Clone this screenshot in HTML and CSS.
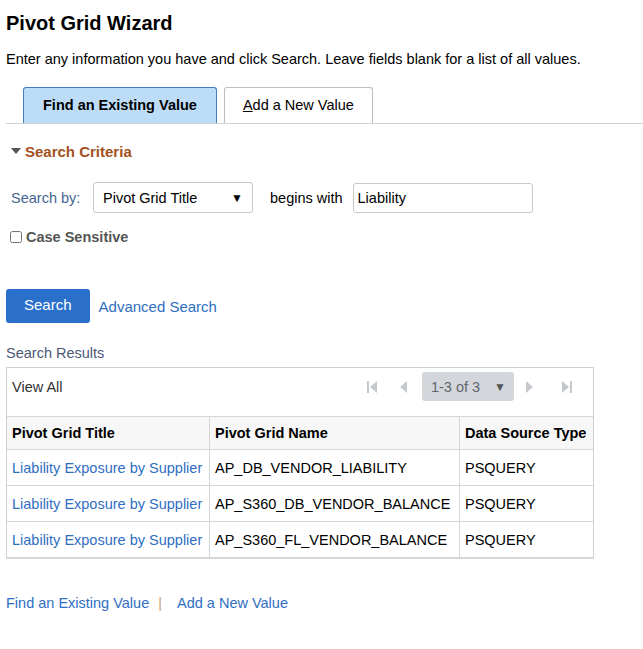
FILE: index.html
```html
<!DOCTYPE html>
<html lang="en">
  <head>
    <meta charset="UTF-8" />
    <meta name="viewport" content="width=device-width, initial-scale=1.0">
    <title>Pivot Grid Wizard</title>
    <link rel="stylesheet" href="styles.css">
  </head>
  <body>
    <h1 class="page-title">Pivot Grid Wizard</h1>
    <p class="instructions">Enter any information you have and click Search. Leave fields blank for a list of all values.</p>

    <div class="tabs">
      <a href="#" class="tab active">Find an Existing Value</a>
      <a href="#" class="tab"><u>A</u>dd a New Value</a>
    </div>

    <div class="criteria">
      <div class="criteria-head">
        <span class="caret"></span>
        <span>Search Criteria</span>
      </div>

      <div class="search-row">
        <label class="field-label">Search by:</label>
        <div class="select">
          <span>Pivot Grid Title</span>
          <span class="select-arrow">&#9660;</span>
        </div>
        <span class="op-label">begins with</span>
        <input type="text" class="text-input" value="Liability" />
      </div>

      <label class="case-row">
        <input type="checkbox" class="check" />
        <span>Case Sensitive</span>
      </label>
    </div>

    <div class="actions">
      <button class="btn">Search</button>
      <a href="#" class="link">Advanced Search</a>
    </div>

    <div class="results-label">Search Results</div>
    <div class="grid">
      <div class="grid-toolbar">
        <span class="view-all">View All</span>
        <div class="pager">
          <!-- first / previous -->
          <svg class="pg-icon pg-first" width="10" height="14" viewBox="0 0 10 14">
            <rect x="0" y="1" width="2" height="12" />
            <polygon points="10,1 10,13 3,7" />
          </svg>
          <svg class="pg-icon pg-prev" width="8" height="14" viewBox="0 0 8 14">
            <polygon points="8,1 8,13 1,7" />
          </svg>
          <div class="page-select">
            <span>1-3 of 3</span>
            <span class="page-arrow">&#9660;</span>
          </div>
          <!-- next / last -->
          <svg class="pg-icon pg-next" width="8" height="14" viewBox="0 0 8 14">
            <polygon points="0,1 0,13 7,7" />
          </svg>
          <svg class="pg-icon pg-last" width="10" height="14" viewBox="0 0 10 14">
            <polygon points="0,1 0,13 7,7" />
            <rect x="8" y="1" width="2" height="12" />
          </svg>
        </div>
      </div>
      <table class="results">
        <thead>
          <tr>
            <th class="c1">Pivot Grid Title</th>
            <th class="c2">Pivot Grid Name</th>
            <th class="c3">Data Source Type</th>
          </tr>
        </thead>
        <tbody>
          <tr>
            <td><a href="#" class="link">Liability Exposure by Supplier</a></td>
            <td>AP_DB_VENDOR_LIABILITY</td>
            <td>PSQUERY</td>
          </tr>
          <tr>
            <td><a href="#" class="link">Liability Exposure by Supplier</a></td>
            <td>AP_S360_DB_VENDOR_BALANCE</td>
            <td>PSQUERY</td>
          </tr>
          <tr>
            <td><a href="#" class="link">Liability Exposure by Supplier</a></td>
            <td>AP_S360_FL_VENDOR_BALANCE</td>
            <td>PSQUERY</td>
          </tr>
        </tbody>
      </table>
    </div>

    <div class="footer-links">
      <a href="#" class="link">Find an Existing Value</a>
      <span class="sep">|</span>
      <a href="#" class="link">Add a New Value</a>
    </div>
  </body>
</html>
```

FILE: styles.css
```css
body {
  margin: 0;
  padding: 0 6px;
  font-family: "Liberation Sans", Arial, sans-serif;
  font-size: 14.5px;
  color: #000;
  background: #fff;
}

.page-title {
  font-size: 20px;
  font-weight: bold;
  margin: 0;
  padding-top: 11px;
  line-height: 24px;
}

.instructions {
  margin: 15px 0 0;
  line-height: 18px;
}

/* tabs */
.tabs {
  display: flex;
  gap: 7px;
  margin-top: 19px;
  padding-left: 17px;
  border-bottom: 1px solid #d2d2d2;
  margin-right: -6px;
}

.tab {
  display: block;
  height: 35px;
  line-height: 35px;
  padding: 0 18px;
  border: 1px solid #bdbdbd;
  border-bottom: none;
  border-radius: 3px 3px 0 0;
  background: #fff;
  color: #000;
  text-decoration: none;
}

.tab.active {
  background: #bcdcf8;
  border-color: #3f7fc0;
  font-weight: bold;
  padding: 0 19px;
}

/* search criteria */
.criteria {
  padding-left: 5px;
}

.criteria-head {
  display: flex;
  align-items: center;
  gap: 4px;
  margin-top: 19px;
  font-size: 15px;
  font-weight: bold;
  color: #a3521d;
  line-height: 18px;
}

.caret {
  width: 0;
  height: 0;
  border-left: 5px solid transparent;
  border-right: 5px solid transparent;
  border-top: 6px solid #555;
  margin-top: -2px;
}

.search-row {
  display: flex;
  align-items: center;
  margin-top: 21px;
}

.field-label {
  color: #456590;
  width: 82px;
}

.select {
  display: flex;
  align-items: center;
  justify-content: space-between;
  box-sizing: border-box;
  width: 160px;
  height: 31px;
  padding: 0 9px;
  border: 1px solid #c8c8c8;
  border-radius: 3px;
  background: #fff;
}

.select-arrow {
  font-size: 12px;
}

.op-label {
  margin: 0 10px 0 17px;
}

.text-input {
  box-sizing: border-box;
  width: 180px;
  height: 30px;
  margin: 0;
  padding: 0 4px;
  border: 1px solid #c8c8c8;
  border-radius: 3px;
  font-family: inherit;
  font-size: 14.5px;
  color: #000;
}

.case-row {
  display: flex;
  align-items: center;
  gap: 4px;
  margin-top: 16px;
  font-weight: bold;
  color: #555;
}

.check {
  margin: 0 0 0 -1px;
  width: 12px;
  height: 12px;
}

/* buttons and links */
.actions {
  display: flex;
  align-items: center;
  gap: 9px;
  margin-top: 44px;
}

.btn {
  height: 34px;
  padding: 0 18px 2px;
  border: none;
  border-radius: 3px;
  background: #2a70cb;
  color: #fff;
  font-family: inherit;
  font-size: 15px;
  line-height: 32px;
}

.link {
  color: #2f6ec2;
  text-decoration: none;
}

.actions .link {
  font-size: 15px;
}

.results-label {
  margin-top: 21px;
  margin-bottom: 5px;
  color: #4b5876;
  line-height: 18px;
}

/* grid */
.grid {
  width: 588px;
  box-sizing: border-box;
  border: 1px solid #d0d0d0;
  border-bottom: 2px solid #d4d6d8;
}

.grid-toolbar {
  display: flex;
  align-items: flex-start;
  justify-content: space-between;
  height: 45px;
  padding: 3px 21px 0 5px;
}

.view-all {
  color: #333;
  margin-top: 8px;
}

.pager {
  display: flex;
  align-items: center;
  margin-top: 1px;
}

.pg-icon {
  fill: #c5c9ce;
}

.pg-first { margin-right: 22px; }
.pg-prev { margin-right: 15px; }
.pg-next { margin-left: 12px; margin-right: 28px; }

.page-select {
  display: flex;
  align-items: center;
  gap: 14px;
  height: 29px;
  padding: 0 8px 0 9px;
  background: #d3d7dc;
  border-radius: 3px;
  color: #60656c;
}

.page-arrow {
  font-size: 12px;
  color: #555;
}

.results {
  width: 100%;
  border-collapse: collapse;
}

.results th,
.results td {
  text-align: left;
  padding: 0 5px;
  border-top: 1px solid #d6d6d6;
  white-space: nowrap;
}

.results th + th,
.results td + td {
  border-left: 1px solid #d6d6d6;
}

.results th {
  height: 32px;
  background: #f7f7f7;
  font-weight: bold;
}

.results td {
  height: 35px;
}

.results .c1 { width: 192px; }
.results .c2 { width: 239px; }

.footer-links {
  display: flex;
  align-items: center;
  margin-top: 36px;
}

.sep {
  color: #c8a27a;
  margin: 0 15px 0 9px;
}
```
